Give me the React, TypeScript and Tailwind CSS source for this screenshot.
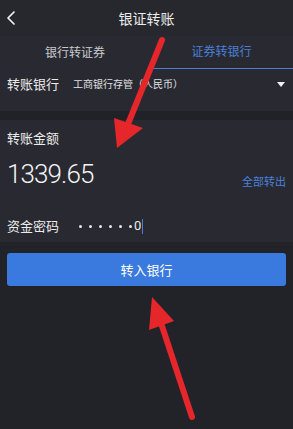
import React from "react";

export default function App() {
  const font = { fontFamily: '"Noto Sans CJK SC", "Noto Sans", sans-serif' };
  return (
    <div
      className="relative w-[293px] h-[429px] overflow-hidden bg-[#222329] text-[#e8e8ea]"
      style={font}
    >
      {/* Header */}
      <div className="relative flex h-[36px] items-center justify-center bg-[#27282e]">
        <svg className="absolute left-[6px] top-[10px]" width="10" height="16" viewBox="0 0 10 16">
          <path d="M8 2 L2 8 L8 14" fill="none" stroke="#f2f2f2" strokeWidth="1.7" strokeLinecap="round" strokeLinejoin="round" />
        </svg>
        <span className="text-[14px] leading-none text-[#ececec]">银证转账</span>
      </div>

      {/* Tabs */}
      <div className="flex h-[33px] bg-[#292a31]">
        <div className="flex w-[150px] items-center justify-center pb-[2px] text-[12px] text-[#c9cacf]">
          银行转证券
        </div>
        <div className="flex flex-1 items-center justify-center border-b border-[#4a7fd9] pb-[2px] text-[12px] text-[#4a7fd9]">
          证券转银行
        </div>
      </div>

      {/* Bank row */}
      <div className="flex h-[42px] items-start bg-[#292a31] px-[7px] pt-[6px]">
        <span className="text-[13px] leading-[18px] text-[#ececec]">转账银行</span>
        <span className="ml-[14px] text-[10px] leading-[18px] text-[#e0e0e3]">工商银行存管（人民币）</span>
        <svg className="ml-auto mt-[7px] mr-[1px]" width="8" height="5" viewBox="0 0 8 5">
          <path d="M0 0 L8 0 L4 5 Z" fill="#f0f0f0" />
        </svg>
      </div>

      {/* Separator band */}
      <div className="h-[9px] bg-[#212228]" />

      {/* Amount section */}
      <div className="flex h-[122px] flex-col bg-[#292a31] px-[7px]">
        <div className="mt-[9px] text-[13px] leading-[18px] text-[#ececec]">转账金额</div>
        <div className="mt-[12px] flex items-end justify-between">
          <span
            className="text-[26px] font-light leading-[30px] tracking-[-0.9px] text-[#f4f4f4]"
            style={{ fontFamily: 'Roboto, "Noto Sans", sans-serif' }}
          >
            1339.65
          </span>
          <span className="text-[11px] leading-[16px] text-[#4a80dc]">全部转出</span>
        </div>
        <div className="mt-[28px] flex items-center">
          <span className="text-[13px] leading-[18px] text-[#ececec]">资金密码</span>
          <span className="ml-[20px] flex items-center gap-[7px]">
            {[0, 1, 2, 3, 4, 5].map((i) => (
              <span key={i} className="block h-[3px] w-[3px] rounded-full bg-[#e8e8e8]" />
            ))}
          </span>
          <span
            className="ml-[2px] text-[13px] leading-[18px] text-[#ececec]"
            style={{ fontFamily: 'Roboto, "Noto Sans", sans-serif' }}
          >
            0
          </span>
          <span className="ml-[1px] h-[15px] w-[1px] bg-[#4a7fd9]" />
        </div>
      </div>

      {/* Button */}
      <div className="px-[7px] pt-[11px]">
        <div className="flex h-[33px] items-center justify-center rounded-[3px] bg-[#3a79dd] text-[13px] text-white">
          转入银行
        </div>
      </div>

      {/* Annotation arrows */}
      <svg className="pointer-events-none absolute left-0 top-0" width="293" height="429" viewBox="0 0 293 429">
        <line x1="162" y1="40" x2="128" y2="124" stroke="#e5262b" strokeWidth="6" strokeLinecap="round" />
        <polygon points="117,148 114,118 143,128" fill="#e5262b" />
        <line x1="192" y1="417" x2="160" y2="320" stroke="#e5262b" strokeWidth="6" strokeLinecap="round" />
        <polygon points="152,297 149,330 174,321" fill="#e5262b" />
      </svg>
    </div>
  );
}
